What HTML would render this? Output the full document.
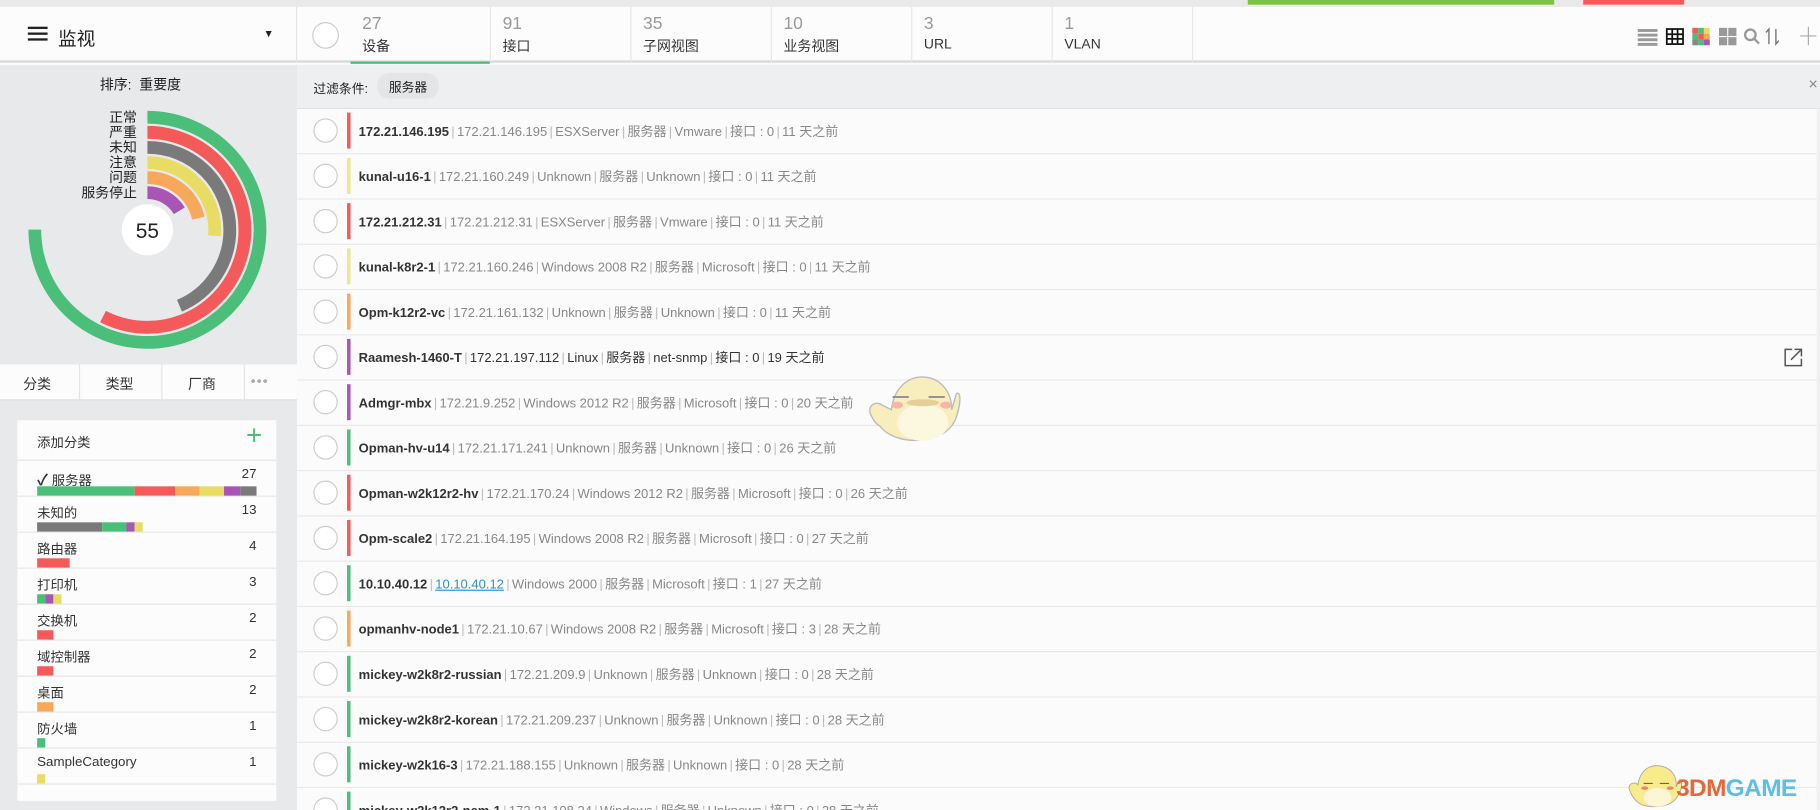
<!DOCTYPE html>
<html><head><meta charset="utf-8"><style>
*{box-sizing:border-box;margin:0;padding:0}
html,body{width:1820px;height:810px;overflow:hidden;background:#fff}
#s{width:1568px;height:698px;transform:scale(1.16071);transform-origin:0 0;position:relative;font-family:"Liberation Sans","Noto Sans CJK SC",sans-serif;color:#333;background:#fafafa}
.a{position:absolute}
.tab{position:absolute;top:6px;height:48px;width:121px;border-right:1px solid #e6e6e6}
.tab .n{position:absolute;left:10px;top:6px;font-size:15px;color:#999}
.tab .l{position:absolute;left:10px;top:25px;font-size:12px;color:#333}
.row{position:absolute;left:256px;width:1309px;height:39px;border-bottom:1px solid #e8e8e8;background:#fbfbfb}
.row .c{position:absolute;left:14px;top:8px;width:21px;height:21px;border:1px solid #ccc;border-radius:50%;background:#fff}
.row .st{position:absolute;left:43px;top:3px;width:3px;height:31px}
.row .t{position:absolute;left:53px;top:11px;font-size:11.2px;color:#888;white-space:nowrap}
.row .t b{color:#333;font-weight:bold}
.row .t i{font-style:normal;color:#bbb;margin:0 2px}
.cat{position:absolute;left:15px;width:223px;height:31px;border-bottom:1px solid #e6e6e6}
.cat .nm{position:absolute;left:17px;top:6px;font-size:11.5px;color:#333}
.cat .ct{position:absolute;right:17px;top:6px;font-size:11.5px;color:#333}
.cat .bar{position:absolute;left:17px;top:22px;height:8px;display:flex}
.cat .bar span{height:8px;display:block}
</style></head><body><div id="s">
<div class="a" style="left:0;top:0;width:1568px;height:6px;background:#e9e9e9"></div>
<div class="a" style="left:1075px;top:0;width:264px;height:4px;background:#7cc243"></div>
<div class="a" style="left:1364px;top:0;width:87px;height:4px;background:#f55a5a"></div>
<div class="a" style="left:0;top:6px;width:1568px;height:48px;background:#fcfcfc;border-bottom:2px solid #d8d8d8"></div>
<div class="a" style="left:24px;top:23px;width:17px;height:2px;background:#222;box-shadow:0 5px 0 #222,0 10px 0 #222"></div>
<div class="a" style="left:50px;top:20px;font-size:16px;color:#222">监视</div>
<div class="a" style="left:227px;top:24px;font-size:9px;color:#222">▼</div>
<div class="a" style="left:255px;top:6px;width:1px;height:48px;background:#e3e3e3"></div>
<div class="a" style="left:269px;top:19px;width:23px;height:23px;border:1px solid #ccc;border-radius:50%;background:#fff"></div>
<div class="tab" style="left:302px"><div class="n">27</div><div class="l">设备</div><div class="a" style="left:0;bottom:-1px;width:120px;height:2px;background:#4bbf7a"></div></div>
<div class="tab" style="left:423px"><div class="n">91</div><div class="l">接口</div></div>
<div class="tab" style="left:544px"><div class="n">35</div><div class="l">子网视图</div></div>
<div class="tab" style="left:665px"><div class="n">10</div><div class="l">业务视图</div></div>
<div class="tab" style="left:786px"><div class="n">3</div><div class="l">URL</div></div>
<div class="tab" style="left:907px"><div class="n">1</div><div class="l">VLAN</div></div>
<svg class="a" style="left:1408px;top:20px" width="160" height="22" viewBox="0 0 160 22">
<g fill="#999"><rect x="3" y="5" width="17" height="2.5"/><rect x="3" y="9" width="17" height="2.5"/><rect x="3" y="13" width="17" height="2.5"/><rect x="3" y="17" width="17" height="2.5"/></g>
<g fill="none" stroke="#111" stroke-width="1.5"><rect x="28" y="5" width="14" height="13"/><path d="M28 9.5h14M28 13.5h14M32.7 5v13M37.3 5v13"/></g>
<rect x="50" y="4" width="5" height="5" fill="#f55a5a"/><rect x="55" y="4" width="5" height="5" fill="#4bbf7a"/><rect x="60" y="4" width="5" height="5" fill="#e8dc64"/>
<rect x="50" y="9" width="5" height="5" fill="#4bbf7a"/><rect x="55" y="9" width="5" height="5" fill="#f55a5a"/><rect x="60" y="9" width="5" height="5" fill="#f7a85a"/>
<rect x="50" y="14" width="5" height="5" fill="#888"/><rect x="55" y="14" width="5" height="5" fill="#4bbf7a"/><rect x="60" y="14" width="5" height="5" fill="#a855b5"/>
<g fill="#999"><rect x="73" y="4" width="7" height="7"/><rect x="81" y="4" width="7" height="7"/><rect x="73" y="12" width="7" height="7"/><rect x="81" y="12" width="7" height="7"/></g>
<circle cx="100" cy="10" r="4.5" fill="none" stroke="#999" stroke-width="2"/><path d="M103.5 13.5l4 4" stroke="#999" stroke-width="2"/>
<path d="M116 18V5l-2.5 3M122 5v13l2.5-3" fill="none" stroke="#777" stroke-width="1.2"/>
<path d="M143 11h14M150 3v16" stroke="#aaa" stroke-width="1"/>
</svg>
<div class="a" style="left:0;top:56px;width:256px;height:642px;background:#e8e9eb"></div>
<div class="a" style="left:86px;top:64px;font-size:12px;color:#222">排序:&nbsp; 重要度</div>
<svg class="a" style="left:0;top:55px" width="256" height="260">
<g fill="none" stroke-width="11" transform="rotate(-90 127 143)">
<circle cx="127" cy="143" r="97" stroke="#4bbf7a" stroke-dasharray="457.1 999"/>
<circle cx="127" cy="143" r="84" stroke="#f55a5a" stroke-dasharray="303.5 999"/>
<circle cx="127" cy="143" r="71" stroke="#7a7a7a" stroke-dasharray="194.6 999"/>
<circle cx="127" cy="143" r="58" stroke="#e8dc64" stroke-dasharray="96.2 999"/>
<circle cx="127" cy="143" r="45" stroke="#f7a85a" stroke-dasharray="60.5 999"/>
<circle cx="127" cy="143" r="32" stroke="#a855b5" stroke-dasharray="33 999"/>
</g>
<circle cx="127" cy="143" r="22" fill="#fff"/>
<text x="127" y="150" font-size="18" text-anchor="middle" fill="#222" font-family="Liberation Sans">55</text>
<g font-size="12" fill="#222" text-anchor="end" font-family="Liberation Sans,Noto Sans CJK SC,sans-serif">
<text x="118" y="50">正常</text><text x="118" y="63">严重</text><text x="118" y="76">未知</text><text x="118" y="89">注意</text><text x="118" y="102">问题</text><text x="118" y="115">服务停止</text></g>
</svg>
<div class="a" style="left:0;top:314px;width:256px;height:31px;background:#fcfcfc;border-bottom:1px solid #ddd;font-size:12px">
<span class="a" style="left:20px;top:8px">分类</span><span class="a" style="left:91px;top:8px">类型</span><span class="a" style="left:162px;top:8px">厂商</span><span class="a" style="left:216px;top:7px;color:#aaa;letter-spacing:1px;font-size:12px">•••</span>
<div class="a" style="left:68px;top:0;width:1px;height:31px;background:#e3e3e3"></div><div class="a" style="left:139px;top:0;width:1px;height:31px;background:#e3e3e3"></div><div class="a" style="left:210px;top:0;width:1px;height:31px;background:#e3e3e3"></div></div>
<div class="a" style="left:15px;top:362px;width:223px;height:328px;background:#fcfcfc"></div>
<div class="cat" style="top:362px;height:35px"><span class="nm" style="top:11px">添加分类</span><span class="a" style="right:12px;top:0px;font-size:24px;color:#4bbf7a;font-weight:100">+</span></div>
<div class="cat" style="top:397px"><span class="nm"><b style="font-size:13px">✓</b> 服务器</span><span class="ct">27</span><div class="bar"><span style="width:84px;background:#4bbf7a"></span><span style="width:35px;background:#f55a5a"></span><span style="width:21px;background:#f7a85a"></span><span style="width:21px;background:#e8dc64"></span><span style="width:14px;background:#a855b5"></span><span style="width:14px;background:#7a7a7a"></span></div></div>
<div class="cat" style="top:428px"><span class="nm">未知的</span><span class="ct">13</span><div class="bar"><span style="width:56px;background:#7a7a7a"></span><span style="width:21px;background:#4bbf7a"></span><span style="width:7px;background:#a855b5"></span><span style="width:7px;background:#e8dc64"></span></div></div>
<div class="cat" style="top:459px"><span class="nm">路由器</span><span class="ct">4</span><div class="bar"><span style="width:28px;background:#f55a5a"></span></div></div>
<div class="cat" style="top:490px"><span class="nm">打印机</span><span class="ct">3</span><div class="bar"><span style="width:7px;background:#4bbf7a"></span><span style="width:7px;background:#a855b5"></span><span style="width:7px;background:#e8dc64"></span></div></div>
<div class="cat" style="top:521px"><span class="nm">交换机</span><span class="ct">2</span><div class="bar"><span style="width:14px;background:#f55a5a"></span></div></div>
<div class="cat" style="top:552px"><span class="nm">域控制器</span><span class="ct">2</span><div class="bar"><span style="width:14px;background:#f55a5a"></span></div></div>
<div class="cat" style="top:583px"><span class="nm">桌面</span><span class="ct">2</span><div class="bar"><span style="width:14px;background:#f7a85a"></span></div></div>
<div class="cat" style="top:614px"><span class="nm">防火墙</span><span class="ct">1</span><div class="bar"><span style="width:7px;background:#4bbf7a"></span></div></div>
<div class="cat" style="top:645px"><span class="nm">SampleCategory</span><span class="ct">1</span><div class="bar"><span style="width:7px;background:#e8dc64"></span></div></div>
<div class="a" style="left:256px;top:56px;width:1312px;height:38px;background:#eeeff1;border-bottom:1px solid #e2e2e2"></div>
<div class="a" style="left:270px;top:68px;font-size:11px;color:#222">过滤条件:</div>
<div class="a" style="left:325px;top:63px;width:53px;height:22px;border-radius:10px;background:#e4e5e7;font-size:11px;color:#222;padding:4px 0 0 10px">服务器</div>
<div class="a" style="left:1558px;top:64px;font-size:14px;color:#888">×</div>
<div class="a" style="left:1565px;top:94px;width:3px;height:604px;background:#f0f0f0"></div>
<div class="row" style="top:94px"><div class="c"></div><div class="st" style="background:#f55a5a"></div><div class="t"><b>172.21.146.195</b><i>|</i>172.21.146.195<i>|</i>ESXServer<i>|</i>服务器<i>|</i>Vmware<i>|</i>接口 : 0<i>|</i>11 天之前</div></div>
<div class="row" style="top:133px"><div class="c"></div><div class="st" style="background:#f0e68c"></div><div class="t"><b>kunal-u16-1</b><i>|</i>172.21.160.249<i>|</i>Unknown<i>|</i>服务器<i>|</i>Unknown<i>|</i>接口 : 0<i>|</i>11 天之前</div></div>
<div class="row" style="top:172px"><div class="c"></div><div class="st" style="background:#f55a5a"></div><div class="t"><b>172.21.212.31</b><i>|</i>172.21.212.31<i>|</i>ESXServer<i>|</i>服务器<i>|</i>Vmware<i>|</i>接口 : 0<i>|</i>11 天之前</div></div>
<div class="row" style="top:211px"><div class="c"></div><div class="st" style="background:#f0e68c"></div><div class="t"><b>kunal-k8r2-1</b><i>|</i>172.21.160.246<i>|</i>Windows 2008 R2<i>|</i>服务器<i>|</i>Microsoft<i>|</i>接口 : 0<i>|</i>11 天之前</div></div>
<div class="row" style="top:250px"><div class="c"></div><div class="st" style="background:#f7a85a"></div><div class="t"><b>Opm-k12r2-vc</b><i>|</i>172.21.161.132<i>|</i>Unknown<i>|</i>服务器<i>|</i>Unknown<i>|</i>接口 : 0<i>|</i>11 天之前</div></div>
<div class="row" style="top:289px"><div class="c"></div><div class="st" style="background:#a855b5"></div><div class="t" style="color:#333"><b>Raamesh-1460-T</b><i>|</i>172.21.197.112<i>|</i>Linux<i>|</i>服务器<i>|</i>net-snmp<i>|</i>接口 : 0<i>|</i>19 天之前</div>
<svg class="a" style="left:1280px;top:10px" width="18" height="18"><path d="M8 2H2v14h14v-6" fill="none" stroke="#555" stroke-width="1.3"/><path d="M7 11l9-9M10 2h6v6" fill="none" stroke="#555" stroke-width="1.3"/></svg></div>
<div class="row" style="top:328px"><div class="c"></div><div class="st" style="background:#a855b5"></div><div class="t"><b>Admgr-mbx</b><i>|</i>172.21.9.252<i>|</i>Windows 2012 R2<i>|</i>服务器<i>|</i>Microsoft<i>|</i>接口 : 0<i>|</i>20 天之前</div></div>
<div class="row" style="top:367px"><div class="c"></div><div class="st" style="background:#4bbf7a"></div><div class="t"><b>Opman-hv-u14</b><i>|</i>172.21.171.241<i>|</i>Unknown<i>|</i>服务器<i>|</i>Unknown<i>|</i>接口 : 0<i>|</i>26 天之前</div></div>
<div class="row" style="top:406px"><div class="c"></div><div class="st" style="background:#f55a5a"></div><div class="t"><b>Opman-w2k12r2-hv</b><i>|</i>172.21.170.24<i>|</i>Windows 2012 R2<i>|</i>服务器<i>|</i>Microsoft<i>|</i>接口 : 0<i>|</i>26 天之前</div></div>
<div class="row" style="top:445px"><div class="c"></div><div class="st" style="background:#f55a5a"></div><div class="t"><b>Opm-scale2</b><i>|</i>172.21.164.195<i>|</i>Windows 2008 R2<i>|</i>服务器<i>|</i>Microsoft<i>|</i>接口 : 0<i>|</i>27 天之前</div></div>
<div class="row" style="top:484px"><div class="c"></div><div class="st" style="background:#4bbf7a"></div><div class="t"><b>10.10.40.12</b><i>|</i><u style="color:#2b8fd6">10.10.40.12</u><i>|</i>Windows 2000<i>|</i>服务器<i>|</i>Microsoft<i>|</i>接口 : 1<i>|</i>27 天之前</div></div>
<div class="row" style="top:523px"><div class="c"></div><div class="st" style="background:#f7a85a"></div><div class="t"><b>opmanhv-node1</b><i>|</i>172.21.10.67<i>|</i>Windows 2008 R2<i>|</i>服务器<i>|</i>Microsoft<i>|</i>接口 : 3<i>|</i>28 天之前</div></div>
<div class="row" style="top:562px"><div class="c"></div><div class="st" style="background:#4bbf7a"></div><div class="t"><b>mickey-w2k8r2-russian</b><i>|</i>172.21.209.9<i>|</i>Unknown<i>|</i>服务器<i>|</i>Unknown<i>|</i>接口 : 0<i>|</i>28 天之前</div></div>
<div class="row" style="top:601px"><div class="c"></div><div class="st" style="background:#4bbf7a"></div><div class="t"><b>mickey-w2k8r2-korean</b><i>|</i>172.21.209.237<i>|</i>Unknown<i>|</i>服务器<i>|</i>Unknown<i>|</i>接口 : 0<i>|</i>28 天之前</div></div>
<div class="row" style="top:640px"><div class="c"></div><div class="st" style="background:#4bbf7a"></div><div class="t"><b>mickey-w2k16-3</b><i>|</i>172.21.188.155<i>|</i>Unknown<i>|</i>服务器<i>|</i>Unknown<i>|</i>接口 : 0<i>|</i>28 天之前</div></div>
<div class="row" style="top:679px"><div class="c"></div><div class="st" style="background:#4bbf7a"></div><div class="t"><b>mickey-w2k12r2-ncm-1</b><i>|</i>172.21.108.24<i>|</i>Windows<i>|</i>服务器<i>|</i>Unknown<i>|</i>接口 : 0<i>|</i>28 天之前</div></div>
<svg class="a" style="left:745px;top:312px" width="85" height="75" viewBox="0 0 85 75"><path d="M5 45c-3-8 5-12 10-8l8 4c2-18 14-30 30-28 14 2 22 14 22 28l4-14c4-2 4 8 0 20-3 10-12 18-30 20-16 2-30-4-36-12-4-2-6-6-8-10z" fill="#f8edbd" stroke="#bbb" stroke-width="1.2"/><ellipse cx="50" cy="52" rx="22" ry="16" fill="#fcf7df"/><path d="M24 30h14M55 30h14" stroke="#888" stroke-width="1.5"/><ellipse cx="28" cy="37" rx="5" ry="3" fill="#f5b5a8"/><ellipse cx="70" cy="37" rx="5" ry="3" fill="#f5b5a8"/><ellipse cx="50" cy="35" rx="14" ry="3" fill="#e3cf97"/></svg>
<svg class="a" style="left:1400px;top:655px" width="50" height="42" viewBox="0 0 50 42"><path d="M4 26c-2-6 4-8 7-5 2-12 10-18 20-16 10 2 14 10 13 18l3-6c3 0 2 8-1 13-4 8-12 10-22 10S8 36 4 26z" fill="#f8eb8c" stroke="#aaa" stroke-width="0.8"/><ellipse cx="28" cy="32" rx="12" ry="8" fill="#fcf6d6"/><path d="M16 20h8M30 20h8" stroke="#666"/><ellipse cx="17" cy="24" rx="3" ry="1.5" fill="#f08080"/><ellipse cx="39" cy="24" rx="3" ry="1.5" fill="#f08080"/></svg>
<div class="a" style="left:1444px;top:668px;font-size:21px;font-weight:bold;letter-spacing:-0.5px"><span style="color:#e8673a">3DM</span><span style="color:#5bbfe6">GAME</span></div>
</div></body></html>
